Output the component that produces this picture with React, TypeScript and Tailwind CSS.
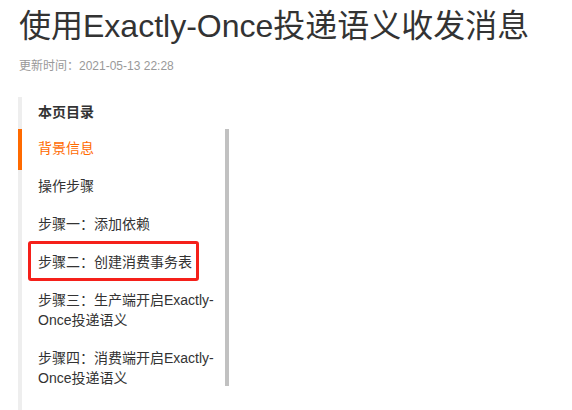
import React from "react";

const font = { fontFamily: '"Liberation Sans", "Noto Sans CJK SC", sans-serif' };

type Item = { text: string; active?: boolean; boxed?: boolean };

const items: Item[] = [
  { text: "背景信息", active: true },
  { text: "操作步骤" },
  { text: "步骤一：添加依赖" },
  { text: "步骤二：创建消费事务表", boxed: true },
  { text: "步骤三：生产端开启Exactly-Once投递语义" },
  { text: "步骤四：消费端开启Exactly-Once投递语义" },
];

export default function App() {
  return (
    <div className="w-[572px] h-[410px] overflow-hidden bg-white" style={font}>
      <h1 className="pl-[19px] pt-[6px] text-[32px] leading-[40px] font-normal text-[#333]">
        使用Exactly-Once投递语义收发消息
      </h1>
      <div className="pl-[19px] mt-[12px] text-[12px] leading-[16px] text-[#999]">
        更新时间：2021-05-13 22:28
      </div>
      <div className="relative ml-[18px] mt-[23px] border-l-4 border-[#eeeeee] h-[320px]">
        <div className="absolute left-[-4px] top-[32px] w-[4px] h-[41px] bg-[#ff6a00]" />
        <div className="pl-[16px] pt-[5px] h-[32px] text-[14px] leading-[20px] font-bold text-[#333]">
          本页目录
        </div>
        <div className="flex">
          <div className="w-[203px] h-[257px] overflow-hidden">
            {items.map((it, i) => (
              <div
                key={i}
                className={`relative pl-[16px] py-[9px] text-[14px] leading-[20px] ${
                  it.active ? "text-[#ff6a00]" : "text-[#333]"
                }`}
              >
                {it.text}
                {it.boxed && (
                  <div className="absolute left-[6px] top-[-2px] w-[171px] h-[40px] border-[3px] border-[#f5201a] rounded-[3px]" />
                )}
              </div>
            ))}
          </div>
          <div className="w-[4px] h-[257px] bg-[#c1c1c1]" />
        </div>
      </div>
    </div>
  );
}
